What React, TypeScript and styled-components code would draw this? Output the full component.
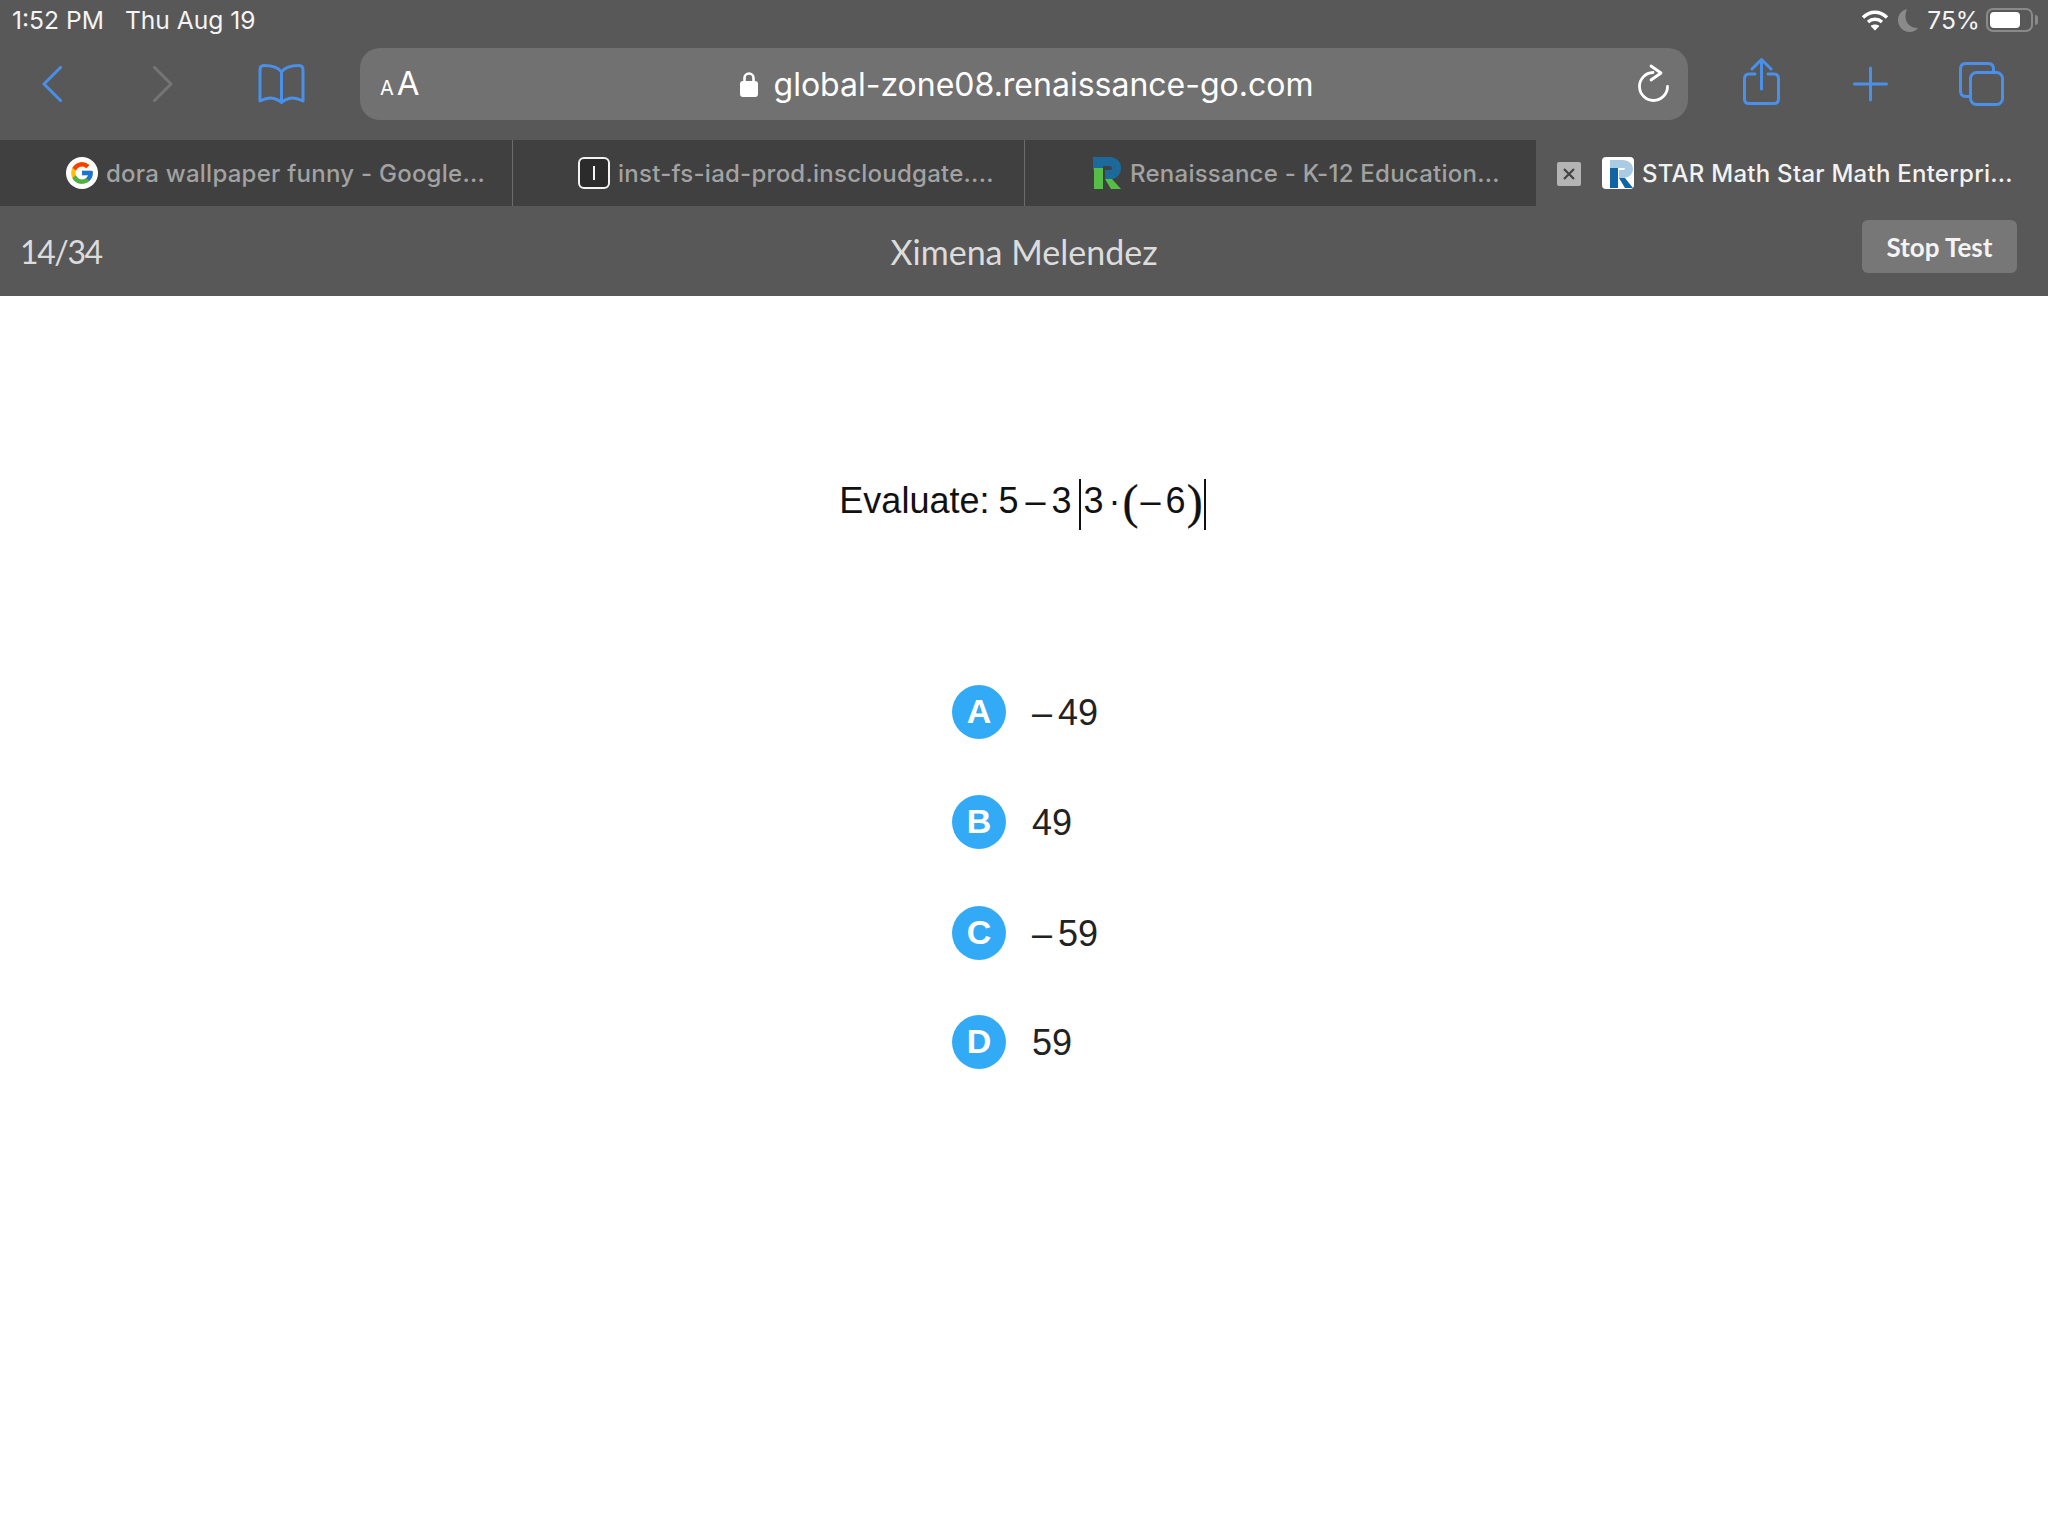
import styled, { createGlobalStyle } from "styled-components";
import { FcGoogle } from "react-icons/fc";

const BLUE = "#4a90e8";

const GlobalStyle = createGlobalStyle`
  html, body {
    margin: 0;
    padding: 0;
    background: #ffffff;
  }
  * {
    box-sizing: border-box;
  }
`;

const answers = [
  { letter: "A", negative: true, value: "49", top: 0 },
  { letter: "B", negative: false, value: "49", top: 56 },
  { letter: "C", negative: true, value: "59", top: 57 },
  { letter: "D", negative: false, value: "59", top: 55 },
];

const RenaissanceMark = () => (
  <FaviconSvg viewBox="0 0 30 32">
    <path
      d="M2 0H18C26 0 30 5 30 11C30 17 26 22 20 22H14V13H18Q21 13 21 11Q21 9 18 9H12V13H2Z"
      fill="#1c6a9c"
    />
    <path d="M3 11H12V32H3ZM14 22H21L30 32H20Z" fill="#56bd46" />
  </FaviconSvg>
);

const StarMark = () => (
  <WhiteTile>
    <svg width="26" height="28" viewBox="0 0 26 28">
      <path
        d="M3 0H15C22 0 26 4 26 9C26 14 22 18 16 18H12V10H16Q18 10 18 8H3Z"
        fill="#a9cbe4"
      />
      <path d="M3 8H11V28H3ZM12 18H18L26 28H18Z" fill="#0f64a6" />
    </svg>
  </WhiteTile>
);

const App = () => {
  return (
    <Page>
      <GlobalStyle />
      <Chrome>
        <StatusBar>
          <StatusLeft>
            <span>1:52 PM</span>
            <span>Thu Aug 19</span>
          </StatusLeft>
          <StatusRight>
            <svg width="28" height="22" viewBox="0 0 28 22" fill="none">
              <path d="M2 8.5C9 1.5 19 1.5 26 8.5" stroke="#fff" strokeWidth="3.4" />
              <path d="M7 13C11 9.4 17 9.4 21 13" stroke="#fff" strokeWidth="3.4" />
              <path d="M14 21.5L9.6 17C12 15 16 15 18.4 17Z" fill="#fff" />
            </svg>
            <MoonIcon width="20" height="24" viewBox="0 0 20 24">
              <path
                d="M9 1C3.5 2.5 0 6.800 0 12C0 18.600 5.200 24 11.500 24C15 24 18 22.500 20 20C13.500 20.500 8 15.800 7.500 9.500C7.300 6.500 8 3.500 9 1Z"
                fill="#8a8a8a"
              />
            </MoonIcon>
            <BatteryText>75%</BatteryText>
            <Battery>
              <BatteryFill />
            </Battery>
          </StatusRight>
        </StatusBar>

        <Toolbar>
          <ToolbarLeft>
            <svg width="20" height="36" viewBox="0 0 20 36" fill="none">
              <path d="M18.500 1.500L2 18L18.500 34.500" stroke={BLUE} strokeWidth="3" strokeLinecap="round" strokeLinejoin="round" />
            </svg>
            <svg width="20" height="36" viewBox="0 0 20 36" fill="none">
              <path d="M1.500 1.500L18 18L1.500 34.500" stroke="#757575" strokeWidth="3" strokeLinecap="round" strokeLinejoin="round" />
            </svg>
            <svg width="47" height="40" viewBox="0 0 47 40" fill="none">
              <path
                d="M23.500 8C20 3 14 1.500 6 1.500Q2 1.500 2 6V37Q10 33 16 34.500C20 35.500 22 37 23.500 38.500C25 37 27 35.500 31 34.500Q37 33 45 37V6Q45 1.500 41 1.500C33 1.500 27 3 23.500 8V38.500"
                stroke={BLUE}
                strokeWidth="3"
                strokeLinecap="round"
                strokeLinejoin="round"
              />
            </svg>
          </ToolbarLeft>

          <AddressBar>
            <ReaderButton>
              <SmallA>A</SmallA>
              <BigA>A</BigA>
            </ReaderButton>
            <AddressCenter>
              <svg width="18" height="26" viewBox="0 0 18 26">
                <path d="M4.500 11V7a4.500 4.500 0 0 1 9 0V11" fill="none" stroke="#fff" strokeWidth="2.600" />
                <rect x="0" y="10" width="18" height="16" rx="3" fill="#fff" />
              </svg>
              <AddressText>global-zone08.renaissance-go.com</AddressText>
            </AddressCenter>
            <ReloadSlot>
              <svg width="32" height="40" viewBox="0 0 32 40" fill="none">
                <path
                  d="M15 10.500A14 14 0 1 0 29.500 24.500"
                  stroke="#fff"
                  strokeWidth="2.800"
                  strokeLinecap="round"
                />
                <path d="M13 4L23 11L13 18" stroke="#fff" strokeWidth="2.800" strokeLinecap="round" strokeLinejoin="round" />
              </svg>
            </ReloadSlot>
          </AddressBar>

          <ToolbarRight>
            <svg width="37" height="47" viewBox="0 0 37 47" fill="none">
              <path
                d="M12 16H6Q1.500 16 1.500 21V41Q1.500 45.500 6 45.500H31Q35.500 45.500 35.500 41V21Q35.500 16 31 16H25"
                stroke={BLUE}
                strokeWidth="3"
                strokeLinecap="round"
              />
              <path d="M18.500 31V2M9 11L18.500 1.500L28 11" stroke={BLUE} strokeWidth="3" strokeLinecap="round" strokeLinejoin="round" />
            </svg>
            <svg width="35" height="36" viewBox="0 0 35 36" fill="none">
              <path d="M1.500 18H33.500M17.500 2V34" stroke={BLUE} strokeWidth="3" strokeLinecap="round" />
            </svg>
            <svg width="45" height="44" viewBox="0 0 45 44" fill="none">
              <rect x="11.500" y="10.500" width="32" height="32" rx="6" stroke={BLUE} strokeWidth="3" />
              <path
                d="M10 34.500H7Q1.500 34.500 1.500 29V7Q1.500 1.500 7 1.500H29Q34.500 1.500 34.500 7V10"
                stroke={BLUE}
                strokeWidth="3"
                strokeLinecap="round"
              />
            </svg>
          </ToolbarRight>
        </Toolbar>

        <TabStrip>
          <Tab>
            <GoogleTile>
              <FcGoogle size={26} />
            </GoogleTile>
            <TabTitle>dora wallpaper funny - Google...</TabTitle>
          </Tab>
          <Tab $divider>
            <InstTile>
              <InstBar />
            </InstTile>
            <TabTitle>inst-fs-iad-prod.inscloudgate....</TabTitle>
          </Tab>
          <Tab $divider>
            <RenaissanceMark />
            <TabTitle>Renaissance - K-12 Education...</TabTitle>
          </Tab>
          <Tab $active>
            <CloseBox>
              <svg width="12" height="12" viewBox="0 0 12 12" fill="none">
                <path d="M1 1L11 11M11 1L1 11" stroke="#444" strokeWidth="2.200" />
              </svg>
            </CloseBox>
            <StarMark />
            <TabTitle $active>STAR Math Star Math Enterpri...</TabTitle>
          </Tab>
        </TabStrip>

        <TestHeader>
          <Progress>14/34</Progress>
          <StudentName>Ximena Melendez</StudentName>
          <StopSlot>
            <StopButton>Stop Test</StopButton>
          </StopSlot>
        </TestHeader>
      </Chrome>

      <Main>
        <Question>
          <Term $left={0}>Evaluate:</Term>
          <Term $left={9}>5</Term>
          <Term $left={7}>–</Term>
          <Term $left={6}>3</Term>
          <AbsBar $left={7} />
          <Term $left={3}>3</Term>
          <Term $left={5}>·</Term>
          <Paren $left={2}>(</Paren>
          <Term $left={2}>–</Term>
          <Term $left={5}>6</Term>
          <Paren $left={1}>)</Paren>
          <AbsBar $left={1} />
        </Question>

        <AnswerList>
          {answers.map((answer) => (
            <Answer key={answer.letter} $top={answer.top}>
              <Badge>{answer.letter}</Badge>
              <AnswerText>
                {answer.negative && <Minus>–</Minus>}
                {answer.value}
              </AnswerText>
            </Answer>
          ))}
        </AnswerList>
      </Main>
    </Page>
  );
};

const Page = styled.div`
  width: 2048px;
  height: 1536px;
  overflow: hidden;
  background: #ffffff;
  display: flex;
  flex-direction: column;
`;

const Chrome = styled.header`
  background: #585858;
  font-family: Inter, "Liberation Sans", sans-serif;
`;

const StatusBar = styled.div`
  height: 48px;
  padding: 8px 10px 16px 12px;
  display: flex;
  align-items: center;
  justify-content: space-between;
  color: #f4f4f4;
  font-size: 24.6px;
`;

const StatusLeft = styled.div`
  display: flex;
  gap: 21px;
`;

const StatusRight = styled.div`
  display: flex;
  align-items: center;
`;

const MoonIcon = styled.svg`
  margin-left: 9px;
`;

const BatteryText = styled.span`
  margin-left: 9px;
`;

const Battery = styled.div`
  position: relative;
  width: 47px;
  height: 24px;
  margin: 0 5px 0 6px;
  padding: 2px;
  border: 2px solid #8a8a8a;
  border-radius: 7px;

  &::after {
    content: "";
    position: absolute;
    right: -7px;
    top: 5px;
    width: 3px;
    height: 10px;
    border-radius: 0 3px 3px 0;
    background: #8a8a8a;
  }
`;

const BatteryFill = styled.div`
  width: 30px;
  height: 16px;
  border-radius: 4px;
  background: #ffffff;
`;

const Toolbar = styled.div`
  height: 92px;
  display: flex;
`;

const ToolbarLeft = styled.div`
  width: 360px;
  height: 72px;
  padding-left: 42px;
  display: flex;
  align-items: center;

  svg:nth-child(2) {
    margin-left: 91px;
  }
  svg:nth-child(3) {
    margin-left: 85px;
  }
`;

const AddressBar = styled.div`
  width: 1328px;
  height: 72px;
  padding: 0 20px;
  border-radius: 20px;
  background: #717171;
  display: grid;
  grid-template-columns: 1fr auto 1fr;
  align-items: center;
  color: #ffffff;
`;

const ReaderButton = styled.div`
  display: flex;
  align-items: baseline;
  gap: 3px;
  padding-bottom: 2px;
`;

const SmallA = styled.span`
  font-size: 20px;
`;

const BigA = styled.span`
  font-size: 33px;
`;

const AddressCenter = styled.div`
  margin-left: 5px;
  display: flex;
  align-items: center;
  gap: 16px;
`;

const AddressText = styled.span`
  font-size: 32px;
  white-space: nowrap;
`;

const ReloadSlot = styled.div`
  display: flex;
  justify-content: flex-end;
  margin-right: -2px;
  margin-top: -4px;
`;

const ToolbarRight = styled.div`
  flex: 1;
  height: 72px;
  padding-left: 55px;
  display: flex;
  align-items: center;

  svg:nth-child(1) {
    margin-bottom: 5px;
  }
  svg:nth-child(2) {
    margin-left: 73px;
  }
  svg:nth-child(3) {
    margin-left: 71px;
  }
`;

const TabStrip = styled.div`
  height: 66px;
  display: grid;
  grid-template-columns: repeat(4, 512px);
`;

const Tab = styled.div<{ $divider?: boolean; $active?: boolean }>`
  position: relative;
  padding-left: 66px;
  display: flex;
  align-items: center;
  gap: 8px;
  background: ${({ $active }) => ($active ? "#585858" : "#404040")};

  ${({ $divider }) =>
    $divider &&
    `&::before {
      content: "";
      position: absolute;
      left: 0;
      top: 0;
      bottom: 0;
      width: 1px;
      background: #6c6c6c;
    }`}
`;

const TabTitle = styled.span<{ $active?: boolean }>`
  font-size: 24px;
  font-weight: 500;
  letter-spacing: 0.25px;
  white-space: nowrap;
  color: ${({ $active }) => ($active ? "#f2f2f2" : "#a2a2a2")};
`;

const GoogleTile = styled.div`
  width: 32px;
  height: 32px;
  border-radius: 50%;
  background: #ffffff;
  display: grid;
  place-items: center;
`;

const InstTile = styled.div`
  width: 32px;
  height: 32px;
  border: 2px solid #f2f2f2;
  border-radius: 6px;
  background: #2b2b2b;
  display: grid;
  place-items: center;
`;

const InstBar = styled.div`
  width: 2px;
  height: 14px;
  background: #f2f2f2;
`;

const FaviconSvg = styled.svg`
  width: 32px;
  height: 32px;
`;

const WhiteTile = styled.div`
  width: 32px;
  height: 32px;
  padding: 3px 1px 1px 5px;
  border-radius: 4px;
  background: #ffffff;
`;

const CloseBox = styled.div`
  position: absolute;
  left: 21px;
  top: 22px;
  width: 24px;
  height: 24px;
  border-radius: 2px;
  background: #b4b4b4;
  display: grid;
  place-items: center;
`;

const TestHeader = styled.div`
  height: 90px;
  padding: 0 31px;
  display: grid;
  grid-template-columns: 1fr auto 1fr;
  align-items: center;
  font-family: Lato, "Noto Sans", sans-serif;
`;

const Progress = styled.span`
  margin-left: -11px;
  font-size: 32px;
  letter-spacing: -1.4px;
  color: #dcdcdc;
`;

const StudentName = styled.span`
  font-size: 34px;
  color: #dcdcdc;
`;

const StopSlot = styled.div`
  display: flex;
  justify-content: flex-end;
  margin-top: -9px;
`;

const StopButton = styled.div`
  width: 155px;
  height: 53px;
  border-radius: 6px;
  background: #777777;
  color: #f4f4f4;
  font-size: 26px;
  font-weight: 700;
  display: grid;
  place-items: center;
`;

const Main = styled.main`
  padding-top: 182px;
  display: flex;
  flex-direction: column;
  align-items: center;
  font-family: "Liberation Sans", Arial, sans-serif;
`;

const Question = styled.div`
  height: 52px;
  padding-right: 3px;
  display: flex;
  align-items: center;
  color: #111111;
`;

const Term = styled.span<{ $left: number }>`
  margin-left: ${({ $left }) => $left}px;
  padding-bottom: 7px;
  font-size: 36px;
  white-space: nowrap;
`;

const Paren = styled.span<{ $left: number }>`
  margin-left: ${({ $left }) => $left}px;
  padding-bottom: 5px;
  font-family: "Liberation Serif", serif;
  font-size: 48px;
  -webkit-text-stroke: 0.3px #111111;
`;

const AbsBar = styled.span<{ $left: number }>`
  width: 2px;
  height: 51px;
  margin-left: ${({ $left }) => $left}px;
  background: #111111;
`;

const AnswerList = styled.div`
  width: 144px;
  margin-top: 155px;
  display: flex;
  flex-direction: column;
`;

const Answer = styled.div<{ $top: number }>`
  margin-top: ${({ $top }) => $top}px;
  display: flex;
  align-items: center;
  gap: 26px;
`;

const Badge = styled.div`
  flex: none;
  width: 54px;
  height: 54px;
  padding-bottom: 2px;
  border-radius: 50%;
  background: #33aaf6;
  color: #ffffff;
  font-size: 34px;
  font-weight: 700;
  display: grid;
  place-items: center;
`;

const AnswerText = styled.div`
  padding-top: 2px;
  font-size: 36px;
  color: #222222;
  white-space: nowrap;
`;

const Minus = styled.span`
  margin-right: 6px;
`;

export default App;
